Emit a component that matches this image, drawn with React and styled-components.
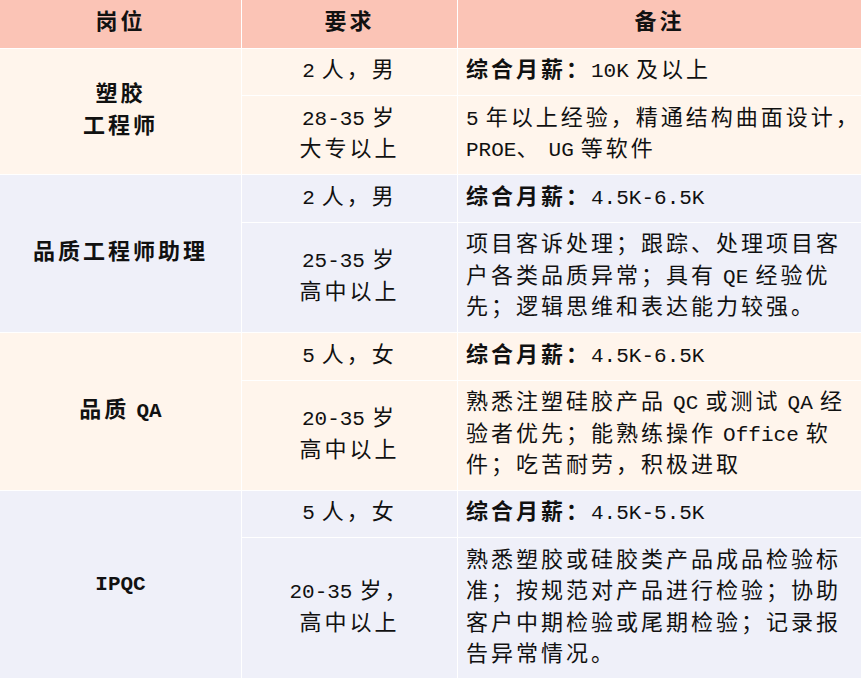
import React from "react";
import styled, { createGlobalStyle } from "styled-components";

const colors = {
  header: "#fbc4b6",
  cream: "#fff5ec",
  lavender: "#eff0f9",
  line: "#ffffff",
  text: "#111111",
};

const GlobalStyle = createGlobalStyle`
  html, body {
    margin: 0;
    padding: 0;
    background: #ffffff;
  }
  body {
    font-family: "Liberation Mono", "Noto Sans CJK SC", monospace;
    color: ${colors.text};
  }
`;

const Table = styled.div`
  display: grid;
  grid-template-columns: 241px 215px 1fr;
  grid-template-rows: ${(p) => p.$rows.map((r) => `${r}px`).join(" ")};
  gap: 1px;
  width: 861px;
  background: ${colors.line};
`;

const Cell = styled.div`
  background: ${(p) => p.$bg};
  display: flex;
  flex-direction: column;
  justify-content: center;
  align-items: ${(p) => (p.$left ? "flex-start" : "center")};
  padding: ${(p) => (p.$left ? "0 0 0 8px" : "0 4px")};
  min-width: 0;
  font-size: 22px;
  line-height: 31.5px;
  letter-spacing: 3px;
  font-weight: ${(p) => (p.$bold ? 700 : 400)};
  white-space: nowrap;
  grid-row: ${(p) => (p.$span ? "span 2" : "auto")};
`;

const Line = styled.div`
  display: block;
`;

const Latin = styled.span`
  font-family: "Liberation Mono", monospace;
  font-size: 21px;
  letter-spacing: 0;
  word-spacing: -5.5px;
`;

const Strong = styled.span`
  font-weight: 700;
`;

const latinRun = /^[A-Za-z0-9.\- ]+$/;

const renderText = (text) =>
  text
    .split(/([A-Za-z0-9.\- ]+)/)
    .filter(Boolean)
    .map((part, i) => (latinRun.test(part) ? <Latin key={i}>{part}</Latin> : part));

const jobs = [
  {
    bg: colors.cream,
    title: ["塑胶", "工程师"],
    count: "2 人，男",
    age: ["28-35 岁", "大专以上"],
    salary: "10K 及以上",
    notes: ["5 年以上经验，精通结构曲面设计，", "PROE、 UG 等软件"],
  },
  {
    bg: colors.lavender,
    title: ["品质工程师助理"],
    count: "2 人，男",
    age: ["25-35 岁", "高中以上"],
    salary: "4.5K-6.5K",
    notes: [
      "项目客诉处理；跟踪、处理项目客",
      "户各类品质异常；具有 QE 经验优",
      "先；逻辑思维和表达能力较强。",
    ],
  },
  {
    bg: colors.cream,
    title: ["品质 QA"],
    count: "5 人，女",
    age: ["20-35 岁", "高中以上"],
    salary: "4.5K-6.5K",
    notes: [
      "熟悉注塑硅胶产品 QC 或测试 QA 经",
      "验者优先；能熟练操作 Office 软",
      "件；吃苦耐劳，积极进取",
    ],
  },
  {
    bg: colors.lavender,
    title: ["IPQC"],
    count: "5 人，女",
    age: ["20-35 岁，", "高中以上"],
    salary: "4.5K-5.5K",
    notes: [
      "熟悉塑胶或硅胶类产品成品检验标",
      "准；按规范对产品进行检验；协助",
      "客户中期检验或尾期检验；记录报",
      "告异常情况。",
    ],
  },
];

const rowHeights = [48, 46, 78, 47, 109, 47, 109, 46, 141];

export default function App() {
  return (
    <>
      <GlobalStyle />
      <Table $rows={rowHeights}>
        <Cell $bg={colors.header} $bold>岗位</Cell>
        <Cell $bg={colors.header} $bold>要求</Cell>
        <Cell $bg={colors.header} $bold>备注</Cell>
        {jobs.map((job) => (
          <React.Fragment key={job.title.join("")}>
            <Cell $bg={job.bg} $bold $span>
              {job.title.map((t) => (
                <Line key={t}>{renderText(t)}</Line>
              ))}
            </Cell>
            <Cell $bg={job.bg}>
              <Line>{renderText(job.count)}</Line>
            </Cell>
            <Cell $bg={job.bg} $left>
              <Line>
                <Strong>综合月薪：</Strong>
                {renderText(job.salary)}
              </Line>
            </Cell>
            <Cell $bg={job.bg}>
              {job.age.map((a) => (
                <Line key={a}>{renderText(a)}</Line>
              ))}
            </Cell>
            <Cell $bg={job.bg} $left>
              {job.notes.map((n) => (
                <Line key={n}>{renderText(n)}</Line>
              ))}
            </Cell>
          </React.Fragment>
        ))}
      </Table>
    </>
  );
}
